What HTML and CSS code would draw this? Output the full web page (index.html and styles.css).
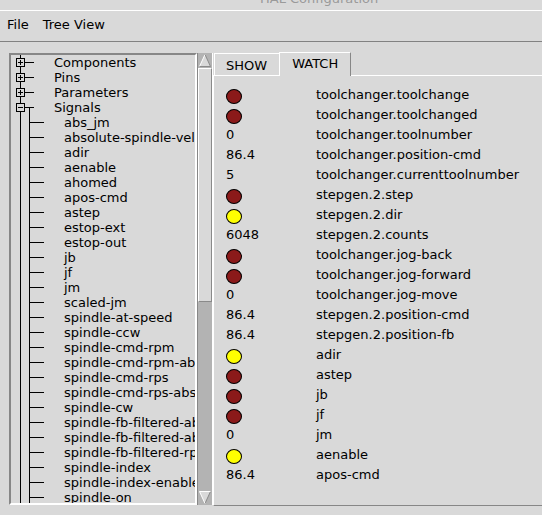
FILE: index.html
```html
<!DOCTYPE html>
<html>
<head>
<meta charset="utf-8">
<link rel="stylesheet" href="styles.css">
</head>
<body>
<div class="titlebar"><span class="title">HAL Configuration</span></div>
<div class="menubar"><span class="menu-item">File</span><span class="menu-item">Tree View</span></div>
<div class="main">
  <div class="tree-wrap">
    <div class="tree">
      <div class="node"><span class="gut-top"><svg class="exp" width="9" height="9" viewBox="0 0 9 9"><rect x="0.5" y="0.5" width="8" height="8" fill="#d9d9d9" stroke="#000"/><path d="M2 4.5H7M4.5 2V7" stroke="#000"/></svg><span class="hline short"></span></span><span class="label">Components</span></div>
      <div class="node"><span class="gut-top"><svg class="exp" width="9" height="9" viewBox="0 0 9 9"><rect x="0.5" y="0.5" width="8" height="8" fill="#d9d9d9" stroke="#000"/><path d="M2 4.5H7M4.5 2V7" stroke="#000"/></svg><span class="hline short"></span></span><span class="label">Pins</span></div>
      <div class="node"><span class="gut-top"><svg class="exp" width="9" height="9" viewBox="0 0 9 9"><rect x="0.5" y="0.5" width="8" height="8" fill="#d9d9d9" stroke="#000"/><path d="M2 4.5H7M4.5 2V7" stroke="#000"/></svg><span class="hline short"></span></span><span class="label">Parameters</span></div>
      <div class="node"><span class="gut-top"><svg class="exp" width="9" height="9" viewBox="0 0 9 9"><rect x="0.5" y="0.5" width="8" height="8" fill="#d9d9d9" stroke="#000"/><path d="M2 4.5H7" stroke="#000"/></svg><span class="hline short"></span></span><span class="label">Signals</span></div>
      <div class="children">
        <div class="node"><span class="gut-child"><span class="hline long"></span></span><span class="label">abs_jm</span></div>
        <div class="node"><span class="gut-child"><span class="hline long"></span></span><span class="label">absolute-spindle-vel</span></div>
        <div class="node"><span class="gut-child"><span class="hline long"></span></span><span class="label">adir</span></div>
        <div class="node"><span class="gut-child"><span class="hline long"></span></span><span class="label">aenable</span></div>
        <div class="node"><span class="gut-child"><span class="hline long"></span></span><span class="label">ahomed</span></div>
        <div class="node"><span class="gut-child"><span class="hline long"></span></span><span class="label">apos-cmd</span></div>
        <div class="node"><span class="gut-child"><span class="hline long"></span></span><span class="label">astep</span></div>
        <div class="node"><span class="gut-child"><span class="hline long"></span></span><span class="label">estop-ext</span></div>
        <div class="node"><span class="gut-child"><span class="hline long"></span></span><span class="label">estop-out</span></div>
        <div class="node"><span class="gut-child"><span class="hline long"></span></span><span class="label">jb</span></div>
        <div class="node"><span class="gut-child"><span class="hline long"></span></span><span class="label">jf</span></div>
        <div class="node"><span class="gut-child"><span class="hline long"></span></span><span class="label">jm</span></div>
        <div class="node"><span class="gut-child"><span class="hline long"></span></span><span class="label">scaled-jm</span></div>
        <div class="node"><span class="gut-child"><span class="hline long"></span></span><span class="label">spindle-at-speed</span></div>
        <div class="node"><span class="gut-child"><span class="hline long"></span></span><span class="label">spindle-ccw</span></div>
        <div class="node"><span class="gut-child"><span class="hline long"></span></span><span class="label">spindle-cmd-rpm</span></div>
        <div class="node"><span class="gut-child"><span class="hline long"></span></span><span class="label">spindle-cmd-rpm-abs</span></div>
        <div class="node"><span class="gut-child"><span class="hline long"></span></span><span class="label">spindle-cmd-rps</span></div>
        <div class="node"><span class="gut-child"><span class="hline long"></span></span><span class="label">spindle-cmd-rps-abs</span></div>
        <div class="node"><span class="gut-child"><span class="hline long"></span></span><span class="label">spindle-cw</span></div>
        <div class="node"><span class="gut-child"><span class="hline long"></span></span><span class="label">spindle-fb-filtered-abs-rpm</span></div>
        <div class="node"><span class="gut-child"><span class="hline long"></span></span><span class="label">spindle-fb-filtered-abs-rps</span></div>
        <div class="node"><span class="gut-child"><span class="hline long"></span></span><span class="label">spindle-fb-filtered-rps</span></div>
        <div class="node"><span class="gut-child"><span class="hline long"></span></span><span class="label">spindle-index</span></div>
        <div class="node"><span class="gut-child"><span class="hline long"></span></span><span class="label">spindle-index-enable</span></div>
        <div class="node"><span class="gut-child"><span class="hline long"></span></span><span class="label">spindle-on</span></div>
        <div class="node"><span class="gut-child"><span class="hline long"></span></span><span class="label">spindle-revs</span></div>
      </div>
    </div>
    <div class="scrollbar">
      <svg class="arrow" width="14" height="15" viewBox="0 0 14 15"><path d="M7 1.5L12.5 13.5H1.5Z" fill="#d9d9d9"/><path d="M1.5 13.5L7 1.5" stroke="#fff" fill="none"/><path d="M7 1.5L12.5 13.5H1.5" stroke="#8a8a8a" fill="none"/></svg>
      <div class="thumb"></div>
      <div class="trough"></div>
      <svg class="arrow" width="14" height="15" viewBox="0 0 14 15"><path d="M1.5 1.5H12.5L7 13.5Z" fill="#d9d9d9"/><path d="M7 13.5L12.5 1.5" stroke="#8a8a8a" fill="none"/><path d="M7 13.5L1.5 1.5H12.5" stroke="#fff" fill="none"/></svg>
    </div>
  </div>
  <div class="notebook">
    <div class="tabbar">
      <span class="tab-gap"></span>
      <span class="tab tab-show">SHOW</span>
      <span class="tab tab-watch">WATCH</span>
      <span class="tab-fill"></span>
    </div>
    <div class="panel">
      <div class="row"><span class="val"><span class="led red"></span></span><span class="name">toolchanger.toolchange</span></div>
      <div class="row"><span class="val"><span class="led red"></span></span><span class="name">toolchanger.toolchanged</span></div>
      <div class="row"><span class="val">0</span><span class="name">toolchanger.toolnumber</span></div>
      <div class="row"><span class="val">86.4</span><span class="name">toolchanger.position-cmd</span></div>
      <div class="row"><span class="val">5</span><span class="name">toolchanger.currenttoolnumber</span></div>
      <div class="row"><span class="val"><span class="led red"></span></span><span class="name">stepgen.2.step</span></div>
      <div class="row"><span class="val"><span class="led yellow"></span></span><span class="name">stepgen.2.dir</span></div>
      <div class="row"><span class="val">6048</span><span class="name">stepgen.2.counts</span></div>
      <div class="row"><span class="val"><span class="led red"></span></span><span class="name">toolchanger.jog-back</span></div>
      <div class="row"><span class="val"><span class="led red"></span></span><span class="name">toolchanger.jog-forward</span></div>
      <div class="row"><span class="val">0</span><span class="name">toolchanger.jog-move</span></div>
      <div class="row"><span class="val">86.4</span><span class="name">stepgen.2.position-cmd</span></div>
      <div class="row"><span class="val">86.4</span><span class="name">stepgen.2.position-fb</span></div>
      <div class="row"><span class="val"><span class="led yellow"></span></span><span class="name">adir</span></div>
      <div class="row"><span class="val"><span class="led red"></span></span><span class="name">astep</span></div>
      <div class="row"><span class="val"><span class="led red"></span></span><span class="name">jb</span></div>
      <div class="row"><span class="val"><span class="led red"></span></span><span class="name">jf</span></div>
      <div class="row"><span class="val">0</span><span class="name">jm</span></div>
      <div class="row"><span class="val"><span class="led yellow"></span></span><span class="name">aenable</span></div>
      <div class="row"><span class="val">86.4</span><span class="name">apos-cmd</span></div>
    </div>
  </div>
</div>
</body>
</html>
```
FILE: styles.css
```css
* { box-sizing: border-box; }
html, body {
  margin: 0;
  padding: 0;
}
body {
  width: 542px;
  height: 515px;
  overflow: hidden;
  background: #d9d9d9;
  font-family: "DejaVu Sans", "Liberation Sans", sans-serif;
  font-size: 13px;
  line-height: 15px;
  color: #000;
}
.titlebar {
  height: 11px;
  border-bottom: 1px solid #fff;
  overflow: hidden;
  padding-left: 260px;
  color: #9a9a9a;
  white-space: nowrap;
}
.title {
  display: block;
  margin-top: -9px;
}
.menubar {
  display: flex;
  height: 31px;
  padding-top: 6px;
  border-bottom: 1px solid #828282;
}
.menu-item {
  padding: 0 7px;
}
.main {
  display: flex;
  align-items: flex-start;
  padding: 10px 0 0 9px;
}
.tree-wrap {
  display: flex;
  flex: none;
  margin-top: 1px;
}
.tree {
  width: 188px;
  height: 452px;
  border: 2px solid;
  border-color: #878787 #fff #fff #878787;
  overflow: hidden;
  background-image: linear-gradient(#000, #000);
  background-size: 1px 100%;
  background-position: 9px 0;
  background-repeat: no-repeat;
}
.node {
  display: flex;
  align-items: center;
  height: 15px;
  white-space: nowrap;
}
.gut-top {
  display: flex;
  align-items: center;
  flex: none;
  width: 43px;
  height: 15px;
  padding-left: 5px;
}
.gut-child {
  display: flex;
  align-items: center;
  flex: none;
  width: 34px;
  height: 15px;
}
.exp {
  display: block;
  flex: none;
}
.hline {
  display: block;
  height: 1px;
  background: #000;
  flex: none;
}
.hline.short { width: 9px; }
.hline.long { width: 14px; }
.label {
  display: block;
}
.children {
  margin-top: -7px;
  padding-top: 7px;
  margin-left: 18px;
  border-left: 1px solid #000;
}
.scrollbar {
  display: flex;
  flex-direction: column;
  flex: none;
  width: 16px;
  height: 452px;
  border-left: 1px solid #878787;
  border-right: 1px solid #fff;
  background: #b3b3b3;
}
.arrow {
  display: block;
  flex: none;
}
.thumb {
  flex: none;
  height: 234px;
  background: #d9d9d9;
  border: 1px solid;
  border-color: #fff #8a8a8a #8a8a8a #fff;
}
.trough {
  flex: 1;
}
.notebook {
  display: flex;
  flex-direction: column;
  flex: none;
  width: 340px;
  height: 454px;
}
.tabbar {
  display: flex;
  align-items: flex-end;
  height: 24px;
  flex: none;
}
.tab-gap {
  width: 1px;
  height: 1px;
  border-bottom: 1px solid #fff;
}
.tab {
  display: block;
  white-space: nowrap;
}
.tab-show {
  height: 23px;
  padding: 4px 12px 0 11px;
  border-top: 1px solid #fff;
  border-left: 1px solid #fff;
  border-bottom: 1px solid #fff;
}
.tab-watch {
  height: 24px;
  padding: 3px 12px 0 12px;
  border-top: 1px solid #fff;
  border-left: 1px solid #fff;
  border-right: 1px solid #878787;
}
.tab-fill {
  flex: 1;
  height: 1px;
  border-bottom: 1px solid #fff;
}
.panel {
  flex: 1;
  padding: 10px 0 0 12px;
  border-left: 1px solid #fff;
  border-bottom: 1px solid #878787;
}
.row {
  display: flex;
  align-items: flex-start;
  height: 20px;
  white-space: nowrap;
}
.val {
  display: flex;
  align-items: flex-start;
  flex: none;
  width: 90px;
  height: 20px;
  padding-top: 1px;
}
.name {
  display: block;
  padding-top: 1px;
}
.led {
  display: block;
  width: 16px;
  height: 15px;
  margin-top: 2px;
  border: 1px solid #000;
  border-radius: 50%;
}
.led.red { background: #8b1a1a; }
.led.yellow { background: #ffff00; }
```
